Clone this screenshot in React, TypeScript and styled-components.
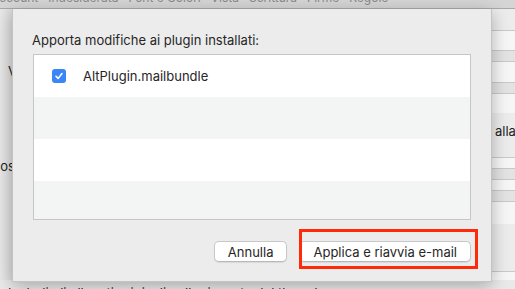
import React from 'react';
import styled, { createGlobalStyle } from 'styled-components';

const GlobalStyle = createGlobalStyle`
	html, body {
		margin: 0;
		padding: 0;
		width: 515px;
		height: 289px;
		overflow: hidden;
		background: #e9e9e9;
	}
	body {
		font-family: Inter, "Liberation Sans", sans-serif;
		-webkit-font-smoothing: antialiased;
	}
`;

const tabs = ['Account', 'Indesiderata', 'Font e Colori', 'Vista', 'Scrittura', 'Firme', 'Regole'];

// bands of the preferences window that peek out right of the sheet
const bands: { h: number; tone: 'white' | 'gray' | 'plain'; label?: string }[] = [
	{ h: 21, tone: 'plain' },
	{ h: 20, tone: 'white' },
	{ h: 11, tone: 'gray' },
	{ h: 21, tone: 'white' },
	{ h: 10, tone: 'gray' },
	{ h: 20, tone: 'white' },
	{ h: 44, tone: 'plain', label: 'alla' },
	{ h: 11, tone: 'white' },
	{ h: 8, tone: 'gray' },
	{ h: 11, tone: 'white' },
	{ h: 11, tone: 'gray' },
	{ h: 23, tone: 'white' },
	{ h: 47, tone: 'plain' },
	{ h: 10, tone: 'white' },
	{ h: 20, tone: 'gray' },
];

export default function App() {
	return (
		<>
			<GlobalStyle />
			<Screen>
				<Window>
					<TabStrip>
						{tabs.map(t => (
							<Tab key={t}>{t}</Tab>
						))}
					</TabStrip>
					<Body>
						<LeftPane>
							<SideLabel $top={54}>Vista</SideLabel>
							<SideLabel $top={79} $shift={-16}>Posta</SideLabel>
						</LeftPane>
						<MidPane />
						<RightPane>
							{bands.map((b, i) => (
								<Band key={i} $h={b.h} $tone={b.tone}>
									{b.label}
								</Band>
							))}
						</RightPane>
					</Body>
					<FootLine>Includi gli allegati originali nelle risposte del thread</FootLine>
				</Window>

				<Sheet>
					<Title>Apporta modifiche ai plugin installati:</Title>
					<PluginList>
						<Row $alt={false}>
							<Check>
								<svg width="10" height="10" viewBox="0 0 10 10">
									<path d="M2 5.3 L4.1 7.4 L8 2.6" fill="none" stroke="#fff" strokeWidth="1.6" strokeLinecap="round" strokeLinejoin="round" />
								</svg>
							</Check>
							<PluginName>AltPlugin.mailbundle</PluginName>
						</Row>
						<Row $alt />
						<Row $alt={false} />
						<Row $alt />
					</PluginList>
					<Actions>
						<Button>Annulla</Button>
						<Button>Applica e riavvia e-mail</Button>
					</Actions>
				</Sheet>

				<Highlight />
			</Screen>
		</>
	);
}

const Screen = styled.div`
	position: relative;
	width: 515px;
	height: 289px;
	overflow: hidden;
`;

const Window = styled.div`
	width: 100%;
	height: 100%;
	display: grid;
	grid-template-rows: 9px 1fr 9px;
	background: #e9e9e9;
`;

const TabStrip = styled.div`
	display: flex;
	gap: 10px;
	align-items: flex-start;
	margin-left: -9px;
	background: #d5d5d5;
	border-bottom: 1px solid #a9a9a9;
	overflow: hidden;
	height: 9px;
	box-sizing: border-box;
`;

const Tab = styled.span`
	font-size: 12px;
	line-height: 14px;
	color: #8a8a8a;
	margin-top: -9px;
	white-space: nowrap;
	flex-shrink: 0;
`;

const Body = styled.div`
	display: grid;
	grid-template-columns: 12px 1fr 23px;
	overflow: hidden;
`;

const LeftPane = styled.div`
	background: linear-gradient(to right, #e8e8e8, #dcdcdc);
	overflow: hidden;
	display: flex;
	flex-direction: column;
`;

const SideLabel = styled.div<{ $top: number; $shift?: number }>`
	margin-top: ${p => p.$top}px;
	margin-left: ${p => 8 + (p.$shift ?? 0)}px;
	font-size: 13px;
	line-height: 16px;
	color: #222;
	white-space: nowrap;
`;

const MidPane = styled.div`
	background: #ececec;
`;

const RightPane = styled.div`
	display: flex;
	flex-direction: column;
	background: #ececec;
	overflow: hidden;
`;

const Band = styled.div<{ $h: number; $tone: 'white' | 'gray' | 'plain' }>`
	flex: 0 0 ${p => p.$h}px;
	box-sizing: border-box;
	border-top: ${p => (p.$tone === 'plain' ? 'none' : '1px solid #c9c9c9')};
	background: ${p => (p.$tone === 'white' ? '#f6f6f6' : p.$tone === 'gray' ? '#e3e3e3' : '#ececec')};
	font-size: 13px;
	line-height: 16px;
	color: #222;
	padding: 10px 0 0 3px;
	white-space: nowrap;
	overflow: hidden;
`;

const FootLine = styled.div`
	font-size: 13px;
	line-height: 16px;
	color: #222;
	padding-left: 8px;
	margin-top: 5px;
	white-space: nowrap;
	overflow: hidden;
`;

const Sheet = styled.div`
	position: absolute;
	left: 12px;
	top: 9px;
	width: 480px;
	height: 273px;
	box-sizing: border-box;
	padding: 23px 20px 0;
	background: #ececec;
	border: 1px solid #c4c4c4;
	border-top: none;
	box-shadow: 0 4px 16px rgba(0, 0, 0, 0.28);
	display: flex;
	flex-direction: column;
`;

const Title = styled.div`
	font-size: 13px;
	line-height: 16px;
	color: #262626;
	margin-left: -1px;
	margin-bottom: 6px;
`;

const PluginList = styled.div`
	height: 166px;
	box-sizing: border-box;
	border: 1px solid #c6c6c6;
	background: #fff;
	overflow: hidden;
	display: flex;
	flex-direction: column;
`;

const Row = styled.div<{ $alt: boolean }>`
	flex: 0 0 42px;
	display: flex;
	align-items: center;
	padding-left: 18px;
	background: ${p => (p.$alt ? '#f3f4f4' : '#ffffff')};
`;

const Check = styled.span`
	width: 14px;
	height: 14px;
	border-radius: 3px;
	background: #3a86f7;
	display: flex;
	align-items: center;
	justify-content: center;
	flex-shrink: 0;
`;

const PluginName = styled.span`
	margin-left: 17px;
	font-size: 13px;
	color: #262626;
`;

const Actions = styled.div`
	display: flex;
	justify-content: flex-end;
	gap: 12px;
	margin-top: 21px;
`;

const Button = styled.button`
	height: 21px;
	padding: 0 13px;
	font-family: Inter, "Liberation Sans", sans-serif;
	font-size: 13px;
	color: #262626;
	background: #fff;
	border: 1px solid #c8c8c8;
	border-bottom-color: #b8b8b8;
	border-radius: 5px;
	box-shadow: 0 1px 1px rgba(0, 0, 0, 0.08);
`;

const Highlight = styled.div`
	position: absolute;
	left: 299px;
	top: 229px;
	width: 179px;
	height: 40px;
	box-sizing: border-box;
	border: 3px solid #ff2a0a;
	pointer-events: none;
`;
